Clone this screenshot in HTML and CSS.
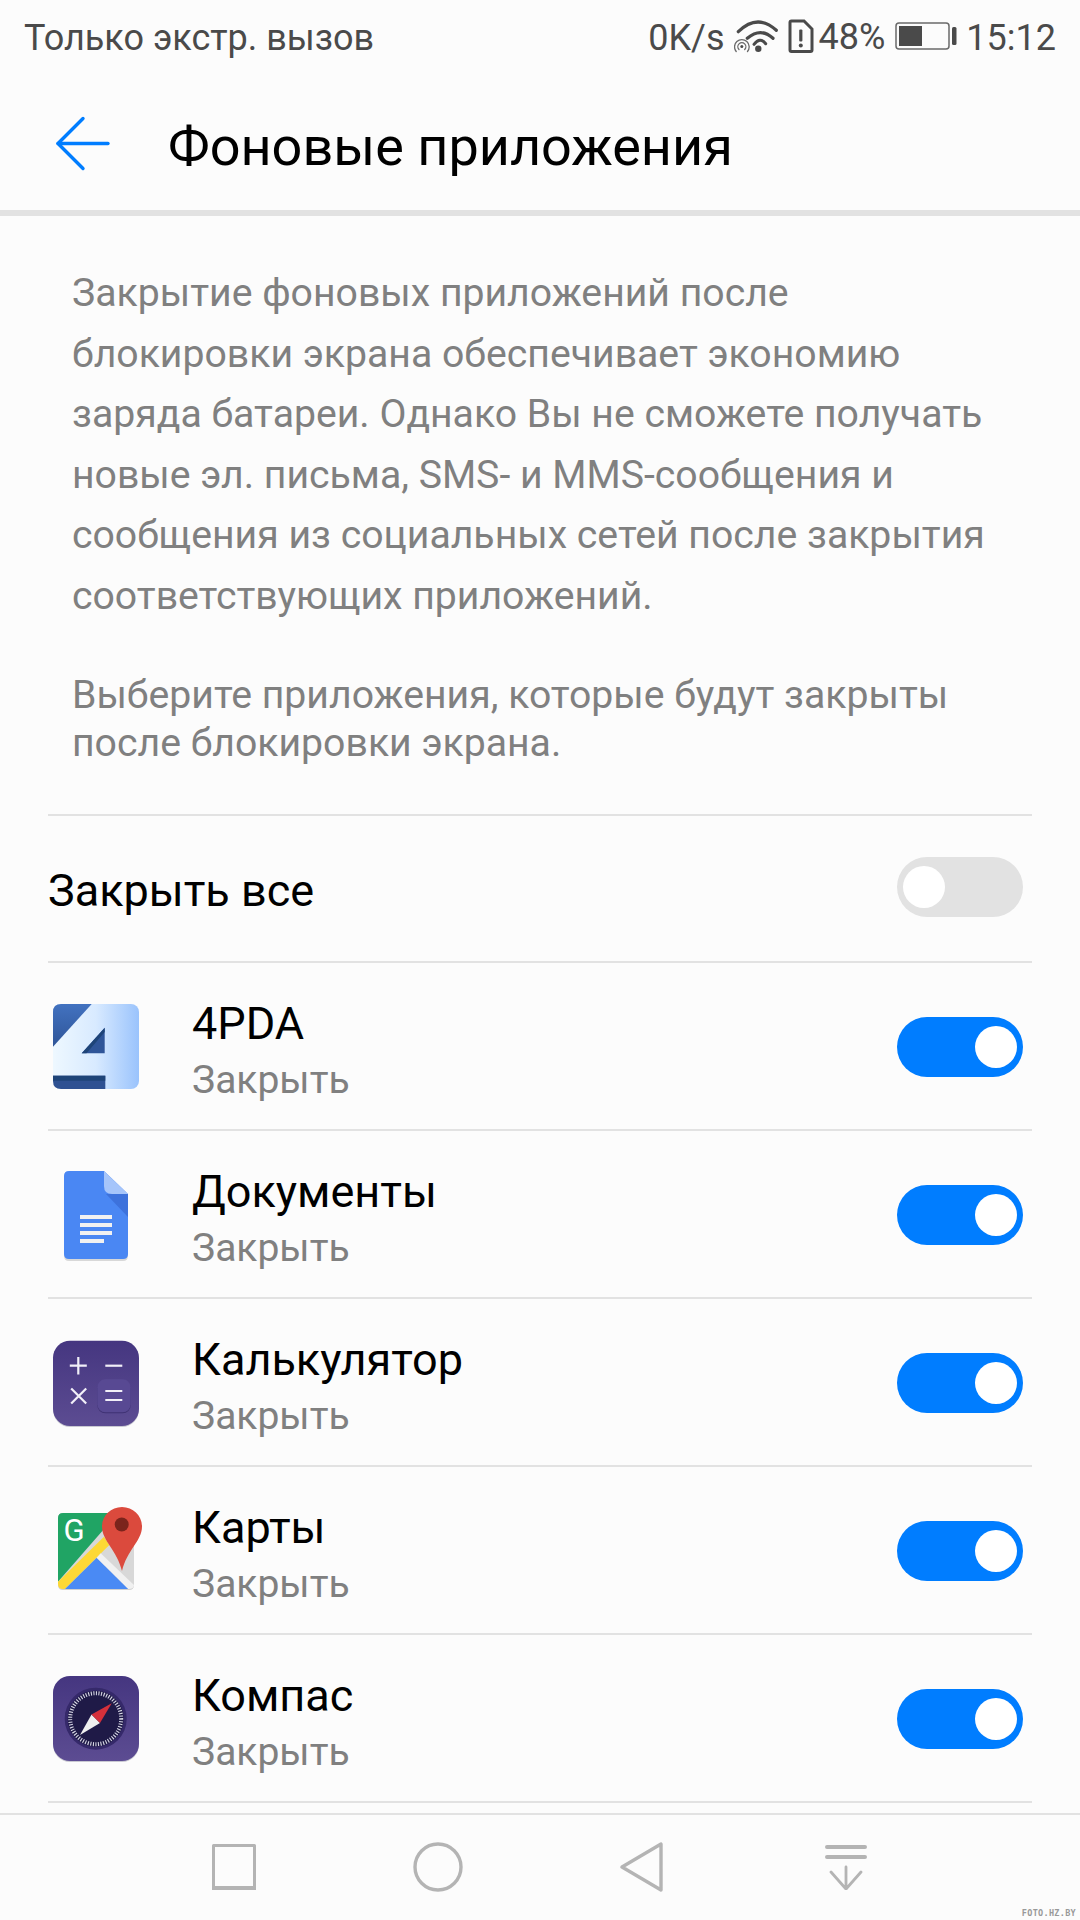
FILE: index.html
```html
<!DOCTYPE html>
<html lang="ru">
<head>
<meta charset="utf-8">
<title>Фоновые приложения</title>
<link rel="stylesheet" href="styles.css">
</head>
<body>
<div class="screen">
  <div class="status">
    <span class="status-left">Только экстр. вызов</span>
    <div class="status-right">
      <span class="speed">0K/s</span>
      <svg class="wifi" width="44" height="34" viewBox="0 0 44 34" fill="none" stroke="#4a4a4a" stroke-linecap="round">
        <path d="M4.300 12.700Q23.300-6 42.300 11.300" stroke-width="3.200"/>
        <path d="M13.300 19.300Q26.700 8 39 19.300" stroke-width="3.200"/>
        <path d="M20 25.300Q26 17.500 31.700 24.700" stroke-width="3"/>
        <circle cx="24.300" cy="29.700" r="3.200" fill="#4a4a4a" stroke="none"/>
        <path d="M2.200 32.500A7.300 7.300 0 1 1 13.500 32.500" stroke="#6a6a6a" stroke-width="1.300"/>
        <path d="M5 30.500A4 4 0 1 1 10.700 30.500" stroke="#6a6a6a" stroke-width="1.300"/>
        <circle cx="7.800" cy="27.500" r="1.500" fill="#4a4a4a" stroke="none"/>
      </svg>
      <svg class="sim" width="26" height="34" viewBox="0 0 26 34">
        <path d="M3.500 2H16L24 10V31Q24 32.500 22.500 32.500H3.500Q2 32.500 2 31V3.500Q2 2 3.500 2Z" fill="none" stroke="#4a4a4a" stroke-width="3"/>
        <rect x="11.200" y="10.500" width="3.200" height="12" rx="1" fill="#4a4a4a"/>
        <circle cx="12.800" cy="26.500" r="2" fill="#4a4a4a"/>
      </svg>
      <span class="pct">48%</span>
      <svg class="battery" width="62" height="28" viewBox="0 0 62 28">
        <rect x="1" y="1" width="53" height="26" rx="3" fill="none" stroke="#6a6a6a" stroke-width="1.500"/>
        <rect x="4" y="4" width="23" height="20" fill="#4a4a4a"/>
        <rect x="57" y="5" width="4.500" height="18" rx="1.500" fill="#4a4a4a"/>
      </svg>
      <span class="clock">15:12</span>
    </div>
  </div>

  <header class="appbar">
    <svg class="back" width="56" height="56" viewBox="0 0 56 56" fill="none" stroke="#007dff" stroke-width="3.400" stroke-linecap="round" stroke-linejoin="round">
      <path d="M53 27.500H3"/>
      <path d="M28 2.500L3 27.500L28 52.500"/>
    </svg>
    <h1 class="title">Фоновые приложения</h1>
  </header>

  <main class="content">
    <div class="description">
      <p class="lead">Закрытие фоновых приложений после блокировки экрана обеспечивает экономию заряда батареи. Однако Вы не сможете получать новые эл. письма, SMS- и MMS-сообщения и сообщения из социальных сетей после закрытия соответствующих приложений.</p>
      <p class="hint">Выберите приложения, которые будут закрыты после блокировки экрана.</p>
    </div>

    <div class="row row-all">
      <span class="all-label">Закрыть все</span>
      <span class="switch"></span>
    </div>

    <div class="row row-app">
      <div class="app-icon">
        <svg width="100" height="110" viewBox="0 0 100 110">
          <defs>
            <linearGradient id="fdBg" x1="0" x2="1" y1="0" y2="0"><stop offset="0" stop-color="#eef8ff"/><stop offset=".5" stop-color="#d8eaff"/><stop offset="1" stop-color="#9ac3fc"/></linearGradient>
            <linearGradient id="fdTop" x1="0" x2="0" y1="0" y2="1"><stop offset="0" stop-color="#4272c0"/><stop offset="1" stop-color="#2f5598"/></linearGradient>
          </defs>
          <rect x="5" y="13" width="86" height="85" rx="8" fill="url(#fdBg)"/>
          <path d="M13 13H43.700L5 55.700V21Q5 13 13 13Z" fill="url(#fdTop)"/>
          <path d="M56.700 36.700V62.300H33.700Z" fill="#2f5598"/>
          <path d="M56.700 36.700V41L38.500 62.300H33.700Z" fill="#1e4478"/>
          <path d="M5 84.700H57.300V98H13Q5 98 5 90Z" fill="#2f5192"/>
          <rect x="5" y="84.700" width="52.300" height="5" fill="#1e4478"/>
        </svg>
      </div>
      <div class="app-text"><span class="app-name">4PDA</span><span class="app-sub">Закрыть</span></div>
      <span class="switch switch-on"></span>
    </div>

    <div class="row row-app">
      <div class="app-icon">
        <svg width="100" height="110" viewBox="0 0 100 110">
          <path d="M21 14H56L80 37V97Q80 102 75 102H21Q16 102 16 97V19Q16 14 21 14Z" fill="#d8d8d8"/>
          <path d="M21 12H56L80 35V95Q80 100 75 100H21Q16 100 16 95V17Q16 12 21 12Z" fill="#4a87f3"/>
          <path d="M58 35H80V58Z" fill="#3d72dc"/>
          <path d="M56 12L80 35H64Q56 35 56 27Z" fill="#a6c5fa"/>
          <rect x="32" y="56" width="32" height="4" fill="#f1f1f1"/>
          <rect x="32" y="64" width="32" height="4" fill="#f1f1f1"/>
          <rect x="32" y="72" width="32" height="4" fill="#f1f1f1"/>
          <rect x="32" y="80" width="24" height="4" fill="#f1f1f1"/>
        </svg>
      </div>
      <div class="app-text"><span class="app-name">Документы</span><span class="app-sub">Закрыть</span></div>
      <span class="switch switch-on"></span>
    </div>

    <div class="row row-app">
      <div class="app-icon">
        <svg width="100" height="110" viewBox="0 0 100 110">
          <defs>
            <linearGradient id="calcBg" x1="0" x2="0" y1="0" y2="1"><stop offset="0" stop-color="#453680"/><stop offset="1" stop-color="#5c4c92"/></linearGradient>
          </defs>
          <rect x="5" y="15" width="86" height="85" rx="17" fill="#c9c9d2"/>
          <rect x="5" y="13.700" width="86" height="85.300" rx="17" fill="url(#calcBg)"/>
          <rect x="49.300" y="53.300" width="33.400" height="33" rx="8" fill="#3f3273"/>
          <rect x="49.300" y="52.300" width="33.400" height="33" rx="8" fill="#584993"/>
          <g stroke="#f1eff8" stroke-width="2.200" fill="none">
            <path d="M30.300 30V47.400M21.800 38.700H38.800"/>
            <path d="M57.300 38.700H74.300"/>
            <path d="M23.200 61.500L38.200 76.500M38.200 61.500L23.200 76.500"/>
            <path d="M57.300 64H74.300M57.300 73H74.300"/>
          </g>
        </svg>
      </div>
      <div class="app-text"><span class="app-name">Калькулятор</span><span class="app-sub">Закрыть</span></div>
      <span class="switch switch-on"></span>
    </div>

    <div class="row row-app">
      <div class="app-icon">
        <svg width="100" height="110" viewBox="0 0 100 110">
          <path d="M15 19H81Q86 19 86 24V90Q86 95 81 95H15Q10 95 10 90V24Q10 19 15 19Z" fill="#d0d0d0"/>
          <path d="M15 18H81Q86 18 86 23V89Q86 94 81 94H15Q10 94 10 89V23Q10 18 15 18Z" fill="#d8d8d8"/>
          <path d="M15 18H70L10 86.700V23Q10 18 15 18Z" fill="#20a464"/>
          <path d="M10 86.700L56 41.700L61.300 50L17 94H15Q10 94 10 89Z" fill="#fdd835"/>
          <path d="M17 94L48.700 62.700L80.300 94Z" fill="#4a8af4"/>
          <path d="M48.700 62.700L52.700 58.300L86 90Q86 94 80.300 94Z" fill="#f1f1f1"/>
          <path d="M74 12C63 12 54 20.500 54 31.500C54 46 69 55 74 76C79 55 94 46 94 31.500C94 20.500 85 12 74 12Z" fill="#db4a3d"/>
          <circle cx="73.700" cy="29.500" r="7" fill="#7b241c"/>
          <text class="map-g" x="15.500" y="45.500">G</text>
        </svg>
      </div>
      <div class="app-text"><span class="app-name">Карты</span><span class="app-sub">Закрыть</span></div>
      <span class="switch switch-on"></span>
    </div>

    <div class="row row-app">
      <div class="app-icon">
        <svg width="100" height="110" viewBox="0 0 100 110">
          <defs>
            <linearGradient id="cmpBg" x1="0" x2="0" y1="0" y2="1"><stop offset="0" stop-color="#453680"/><stop offset="1" stop-color="#5c4c92"/></linearGradient>
          </defs>
          <rect x="5" y="14" width="86" height="85" rx="17" fill="#c9c9d2"/>
          <rect x="5" y="13" width="86" height="85" rx="17" fill="url(#cmpBg)"/>
          <circle cx="47.700" cy="55.700" r="31" fill="#35296a"/>
          <circle cx="47.700" cy="55.700" r="28" fill="#1f1a47"/>
          <circle cx="47.700" cy="55.700" r="25.500" fill="none" stroke="#d8d8e6" stroke-width="4" stroke-dasharray="1.100 1.500"/>
          <path d="M32 72L43.500 51.500L52 60Z" fill="#efefef"/>
          <path d="M63.700 40.300L43.500 51.500L52 60Z" fill="#d5303b"/>
        </svg>
      </div>
      <div class="app-text"><span class="app-name">Компас</span><span class="app-sub">Закрыть</span></div>
      <span class="switch switch-on"></span>
    </div>
    <div class="row row-partial"></div>
  </main>

  <nav class="navbar">
    <svg width="46" height="46" viewBox="0 0 46 46" fill="none" stroke="#b4b4b4" stroke-width="3"><path d="M2.500 1.500H43.500V44.500H2.500Z" stroke-linejoin="round"/><path d="M1 44H45" stroke-width="4"/></svg>
    <svg width="50" height="50" viewBox="0 0 50 50" fill="none" stroke="#b4b4b4" stroke-width="3.400"><circle cx="25" cy="25" r="23"/></svg>
    <svg width="44" height="50" viewBox="0 0 44 50" fill="none" stroke="#b4b4b4" stroke-width="3.400" stroke-linejoin="round"><path d="M41 2V48L2 25Z"/></svg>
    <svg width="42" height="46" viewBox="0 0 42 46" fill="none" stroke="#b4b4b4" stroke-linecap="round"><path d="M2 3H40M2 13H40" stroke-width="4"/><path d="M21 23V44M6 28L21 45L36 28" stroke-width="2.800" stroke-linejoin="round"/></svg>
  </nav>
  <span class="watermark">FOTO.HZ.BY</span>
</div>
</body>
</html>
```

FILE: styles.css
```css
* { box-sizing: border-box; }
html, body { margin: 0; padding: 0; }
body { width: 1080px; height: 1920px; overflow: hidden; background: #fcfcfc; font-family: Roboto, "Noto Sans", sans-serif; }
p, h1 { margin: 0; font-weight: 400; }
.screen { position: relative; width: 1080px; height: 1920px; display: flex; flex-direction: column; background: #fcfcfc; }

.status { height: 76px; flex: none; padding: 0 24px; display: flex; align-items: center; justify-content: space-between; color: #4a4a4a; font-size: 36px; }
.status-right { display: flex; align-items: center; }
.wifi { margin: -4px 0 0 9px; }
.sim { margin: -4px 0 0 10px; }
.pct { margin: -3px 0 0 5px; }
.battery { margin: -4px 0 0 10px; }
.clock { margin-left: 9px; }

.appbar { height: 140px; flex: none; padding: 0 0 0 55px; display: flex; align-items: center; gap: 57px; border-bottom: 6px solid #e2e2e2; }
.back { margin-top: 2px; }
.title { font-size: 54px; color: #000; white-space: nowrap; padding-top: 6px; }

.content { flex: 1; min-height: 0; padding: 0 48px; overflow: hidden; }
.description { padding: 47px 24px 0 24px; }
.lead { font-size: 39.200px; line-height: 60.500px; color: #808080; }
.hint { font-size: 39.200px; line-height: 47.500px; color: #808080; margin-top: 46px; padding-bottom: 47px; }

.row { display: flex; align-items: center; border-top: 2px solid #e2e2e2; }
.row-all { height: 147px; justify-content: space-between; padding-right: 9px; }
.row-all .switch { margin-top: -3px; }
.all-label { font-size: 45px; color: #000; padding-top: 4px; }
.row-app { height: 168px; padding-right: 9px; }
.row-partial { height: 10px; }
.app-icon { width: 144px; flex: none; display: flex; }
.app-text { flex: 1; display: flex; flex-direction: column; gap: 6px; padding-top: 10px; }
.app-name { font-size: 45px; line-height: 52px; color: #000; }
.app-sub { font-size: 39px; line-height: 48px; color: #808080; }
.map-g { font: 400 31px Roboto, sans-serif; fill: #fff; }

.switch { position: relative; width: 126px; height: 60px; border-radius: 30px; background: #e2e2e2; flex: none; }
.switch::after { content: ""; position: absolute; top: 9px; left: 6px; width: 42px; height: 42px; border-radius: 50%; background: #fff; }
.switch-on { background: #007dff; margin-top: 2px; }
.switch-on::after { left: 78px; }

.navbar { position: absolute; left: 0; right: 0; bottom: 0; height: 107px; border-top: 2px solid #e2e2e2; background: #fcfcfc; display: grid; grid-template-columns: repeat(4, 204px); justify-items: center; align-items: center; padding: 0 0 2px 132px; }
.watermark { position: absolute; right: 4px; bottom: 2px; font-family: "DejaVu Sans Mono", monospace; font-size: 8.500px; font-weight: 700; letter-spacing: .3px; color: #999; }
```
